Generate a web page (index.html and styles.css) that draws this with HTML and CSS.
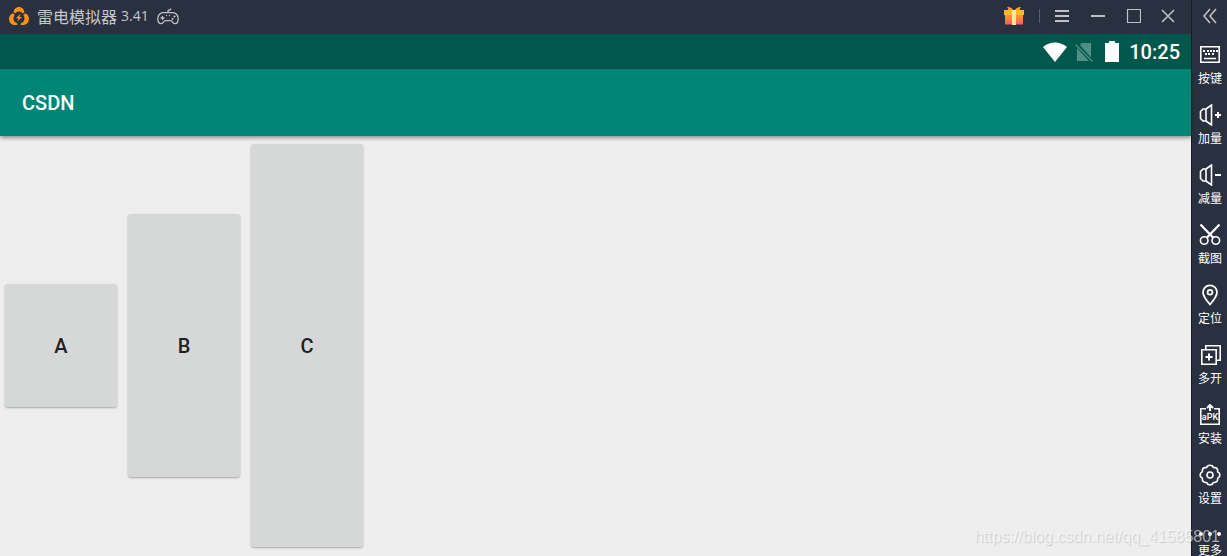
FILE: index.html
```html
<!DOCTYPE html>
<html lang="zh-CN">

<head>
    <meta charset="UTF-8">
    <title>雷电模拟器</title>
    <link rel="stylesheet" href="styles.css">
</head>

<body>
    <div class="emulator">
        <div class="window">
            <header class="title-bar">
                <svg class="logo" width="20" height="18" viewBox="0 0 20 18">
                    <g fill="#ff9212">
                        <path d="M4.6 5.4C4.8 2.3 7 0 10 0s5.200 2.300 5.400 5.400L13.600 6.200C12.600 5 11.400 4.500 10 4.500S7.400 5 6.400 6.200z" />
                        <path d="M3.600 6.300C1.400 7.300 0 9.500 0 12c0 3.400 2.600 6 6 6h2.200v-1.800C5.700 15.500 4.500 13.800 4.500 11.800c0-1.600.5-2.900 1.300-4z" />
                        <path d="M16.400 6.300C18.600 7.300 20 9.500 20 12c0 3.400-2.600 6-6 6h-2.200v-1.800c2.500-.7 3.700-2.400 3.700-4.400 0-1.600-.5-2.900-1.300-4z" />
                        <path d="M11.800 6.500L7 11.300h2.500L8 14.800l5-4.900h-2.600z" />
                    </g>
                </svg>
                <span class="title">雷电模拟器</span>
                <span class="version">3.41</span>
                <svg class="gamepad" width="22" height="17" viewBox="0 0 22 17" fill="none" stroke="#bfc1c4" stroke-width="1.300">
                    <path d="M11 4.500V3.200c0-.8.5-1.200 1.300-1.200H13c.6 0 .8-.3.800-1.500" />
                    <path d="M6 4.700h10c3 0 5.200 2.800 5.200 6 0 3-1.200 5-3.200 5-2.300 0-2.600-3-4.500-3h-5c-1.900 0-2.200 3-4.500 3-2 0-3.200-2-3.200-5 0-3.200 2.200-6 5.200-6z" />
                    <path d="M3.500 10h4M5.500 8v4" />
                    <g fill="#bfc1c4" stroke="none">
                        <circle cx="9.500" cy="7.500" r=".7" />
                        <circle cx="12.500" cy="7.500" r=".7" />
                        <circle cx="17.500" cy="8.500" r="1.100" />
                        <circle cx="15.500" cy="11" r="1.100" />
                    </g>
                </svg>
                <div class="window-controls">
                    <button class="gift" aria-label="礼包">
                        <svg width="20" height="20" viewBox="0 0 20 20">
                            <defs>
                                <linearGradient id="giftBody" x1="0" y1="0" x2="0" y2="1">
                                    <stop offset="0" stop-color="#ff9a2e" />
                                    <stop offset="1" stop-color="#ff5a5f" />
                                </linearGradient>
                            </defs>
                            <path d="M10 5C8.500 2.500 6 .8 3 1l1.500 2L3 4.500zM10 5c1.500-2.500 4-4.200 7-4l-1.500 2L17 4.500z" fill="#ff9e22" />
                            <path d="M0 4h20v5H0z" fill="#ffb52c" />
                            <path d="M1 9h18v9.500H1z" fill="url(#giftBody)" />
                            <path d="M8 4h4v15H8z" fill="#ffe69a" />
                        </svg>
                    </button>
                    <span class="divider"></span>
                    <button aria-label="菜单">
                        <svg width="16" height="16" viewBox="0 0 16 16"><path d="M0 3h14M0 8h14M0 13h14" /></svg>
                    </button>
                    <button aria-label="最小化">
                        <svg width="16" height="16" viewBox="0 0 16 16"><path d="M1 8h14" /></svg>
                    </button>
                    <button aria-label="最大化">
                        <svg width="16" height="16" viewBox="0 0 16 16"><path d="M2.500 1.500h13v13h-13z" stroke-width="1.200" /></svg>
                    </button>
                    <button aria-label="关闭">
                        <svg width="16" height="16" viewBox="0 0 16 16"><path d="M2 2l12 12M14 2L2 14" stroke-width="1.600" /></svg>
                    </button>
                </div>
            </header>

            <div class="status-bar">
                <svg width="24" height="20" viewBox="0 0 24 20"><path d="M12 20L0 5C3.500 2 7.500.5 12 .5S20.500 2 24 5z" fill="#fff" /></svg>
                <svg class="no-sim" width="18" height="20" viewBox="0 0 18 20">
                    <path d="M6.500 1H16v14.500L5 3zM2 6l12 13H2z" fill="#4f8f84" />
                    <path d="M.5 2.500l17 17" stroke="#4f8f84" stroke-width="1.300" />
                </svg>
                <svg class="battery" width="14" height="21" viewBox="0 0 14 21"><path d="M4 0h6v2h4v19H0V2h4z" fill="#fff" /></svg>
                <span class="clock">10:25</span>
            </div>

            <div class="app-bar">CSDN</div>

            <main class="content">
                <button class="pad-button small">A</button>
                <button class="pad-button medium">B</button>
                <button class="pad-button large">C</button>
            </main>
        </div>

        <nav class="sidebar">
            <button class="collapse" aria-label="收起">
                <svg width="14" height="16" viewBox="0 0 14 16"><path d="M7 1L1 8l6 7M13 1L7 8l6 7" /></svg>
            </button>
            <button class="tool">
                <svg width="24" height="22" viewBox="0 0 24 22">
                    <path d="M2.800 2.800h18.400v15.400H2.800z" />
                    <path d="M5 7h2m2 0h2m1 0h2m1 0h2m1 0h2M7 10h2m1 0h2m2 0h2" stroke-width="2" />
                    <path d="M6 14.500h12" stroke-width="1.500" />
                </svg>
                <span>按键</span>
            </button>
            <button class="tool">
                <svg width="24" height="22" viewBox="0 0 24 22">
                    <path d="M8 5H5L2.500 7.500v7L5 17h3zM8 5l5.500-4v20L8 17" />
                    <path d="M17 11h6M20 8v6" stroke-width="2" />
                </svg>
                <span>加量</span>
            </button>
            <button class="tool">
                <svg width="24" height="22" viewBox="0 0 24 22">
                    <path d="M8 5H5L2.500 7.500v7L5 17h3zM8 5l5.500-4v20L8 17" />
                    <path d="M17 11h6" stroke-width="2" />
                </svg>
                <span>减量</span>
            </button>
            <button class="tool">
                <svg width="24" height="22" viewBox="0 0 24 22">
                    <path d="M2.500 .5L15.500 14M21.500 .5L8.500 14" stroke-width="2.200" />
                    <circle cx="6.200" cy="16.500" r="3.800" />
                    <circle cx="17.800" cy="16.500" r="3.800" />
                </svg>
                <span>截图</span>
            </button>
            <button class="tool">
                <svg width="24" height="22" viewBox="0 0 24 22">
                    <path d="M12 20.500C8 16 5 12.500 5 8.300a7 7 0 0 1 14 0C19 12.500 16 16 12 20.500z" stroke-width="1.800" />
                    <circle cx="12" cy="8.300" r="2.400" stroke-width="1.800" />
                </svg>
                <span>定位</span>
            </button>
            <button class="tool">
                <svg width="24" height="22" viewBox="0 0 24 22">
                    <path d="M3.800 5.800h14.400v14.400H3.800zM7.800 5V1.800h14.400v14.400H19" />
                    <path d="M7.500 13h7M11 9.500v7" stroke-width="2" />
                </svg>
                <span>多开</span>
            </button>
            <button class="tool">
                <svg width="24" height="22" viewBox="0 0 24 22">
                    <path d="M8 4.800H2.800v15.400h18.400V4.800H16" />
                    <path d="M12 7V1.500M9 4l3-3 3 3" stroke-width="2" />
                    <text x="12" y="16" class="apk">aPK</text>
                </svg>
                <span>安装</span>
            </button>
            <button class="tool">
                <svg width="24" height="22" viewBox="0 0 24 22">
                    <path d="M9.500 2q2.500-1.600 5 0 .5 2 2.200 1.500 2.800.3 3 3-.5 1.800 1.300 2.200 1.600 2.300 0 4.600-1.800.4-1.300 2.200-.2 2.700-3 3-1.700-.5-2.200 1.500-2.500 1.600-5 0-.5-2-2.200-1.500-2.800-.3-3-3 .5-1.800-1.300-2.200-1.600-2.300 0-4.600 1.800-.4 1.300-2.200.2-2.700 3-3Q9 4 9.500 2z" stroke-linejoin="round" />
                    <circle cx="12" cy="11" r="3" />
                </svg>
                <span>设置</span>
            </button>
            <button class="tool more">
                <svg width="24" height="18" viewBox="0 0 24 18">
                    <g fill="#fff" stroke="none">
                        <circle cx="3" cy="10" r="2" />
                        <circle cx="12" cy="10" r="2" />
                        <circle cx="21" cy="10" r="2" />
                    </g>
                </svg>
                <span>更多</span>
            </button>
        </nav>

        <span class="watermark">https://blog.csdn.net/qq_41585801</span>
    </div>
</body>

</html>
```
FILE: styles.css
```css
* {
    box-sizing: border-box;
}

body {
    margin: 0;
    background-color: #29303f;
    font-family: "Noto Sans CJK SC", sans-serif;
}

button {
    padding: 0;
    border: none;
    background: none;
    cursor: pointer;
}

svg {
    display: block;
    flex: none;
}

.emulator {
    position: relative;
    display: flex;
    height: 100vh;
    overflow: hidden;
}

.window {
    display: flex;
    flex: 1;
    flex-direction: column;
}

/* title bar */
.title-bar {
    display: flex;
    flex: none;
    align-items: center;
    height: 34px;
    padding-left: 9px;
    padding-bottom: 2px;
    color: #c6c8ca;
}

.title {
    margin-left: 8px;
    font-size: 16px;
    line-height: 24px;
}

.version {
    margin: 0 8px 0 4px;
    font-family: "Open Sans", sans-serif;
    font-size: 14px;
    line-height: 24px;
}

.window-controls {
    display: flex;
    align-items: center;
    margin-left: auto;
    padding-right: 15px;
    gap: 19px;
}

.window-controls svg {
    fill: none;
    stroke: #bfc1c4;
    stroke-width: 2;
}

.window-controls .gift {
    margin-right: -4px;
}

.window-controls .gift svg {
    stroke: none;
}

.divider {
    width: 1px;
    height: 14px;
    margin-right: -4px;
    background-color: #596170;
}

/* android screen */
.status-bar {
    display: flex;
    flex: none;
    align-items: center;
    justify-content: flex-end;
    height: 35px;
    padding-right: 11px;
    gap: 10px;
    background-color: #00574b;
}

.no-sim {
    margin-left: -2px;
}

.battery {
    margin-left: 2px;
}

.clock {
    color: #fff;
    font-family: Roboto, sans-serif;
    font-size: 20px;
    font-weight: 500;
    line-height: 24px;
}

.app-bar {
    z-index: 1;
    flex: none;
    padding: 2px 22px 0;
    background-color: #008577;
    box-shadow: 0 2px 4px rgba(0, 0, 0, 0.4);
    color: #fff;
    font-family: Roboto, sans-serif;
    font-size: 20px;
    font-weight: 500;
    line-height: 65px;
}

.content {
    display: flex;
    flex: 1;
    align-items: center;
    padding-left: 5px;
    padding-bottom: 2px;
    gap: 11px;
    background-color: #eee;
}

.pad-button {
    width: 112px;
    padding-top: 2px;
    border-radius: 3px;
    background-color: #d6d8d7;
    box-shadow: 0 1px 2px rgba(0, 0, 0, 0.3);
    color: #1f2020;
    font-family: Roboto, sans-serif;
    font-size: 20px;
    font-weight: 500;
}

.small {
    height: 123px;
}

.medium {
    height: 263px;
}

.large {
    height: 403px;
}

/* tool column */
.sidebar {
    display: flex;
    flex: none;
    flex-direction: column;
    align-items: center;
    width: 36px;
    padding-left: 1px;
    border-left: 1px solid #161b26;
    background-color: #29303f;
}

.sidebar svg {
    fill: none;
    stroke: #fff;
    stroke-width: 1.6;
}

.collapse {
    flex: none;
    height: 32px;
    margin-bottom: 12px;
}

.sidebar .collapse svg {
    stroke: #bfc1c4;
}

.tool {
    display: flex;
    flex: none;
    flex-direction: column;
    align-items: center;
    height: 60px;
    gap: 4px;
    color: #fff;
    font-family: "Noto Sans CJK SC", sans-serif;
    font-size: 12px;
    line-height: 16px;
}

.more {
    gap: 0;
}

.sidebar .apk {
    fill: #fff;
    stroke: none;
    font-family: Roboto, sans-serif;
    font-size: 9px;
    font-weight: 500;
    text-anchor: middle;
}

.watermark {
    position: absolute;
    right: 7px;
    bottom: 8px;
    z-index: 2;
    color: rgba(255, 255, 255, 0.6);
    font-family: "Liberation Sans", sans-serif;
    font-size: 16px;
    line-height: 22px;
    text-shadow: 1px 1px 1px rgba(0, 0, 0, 0.15);
}
```
